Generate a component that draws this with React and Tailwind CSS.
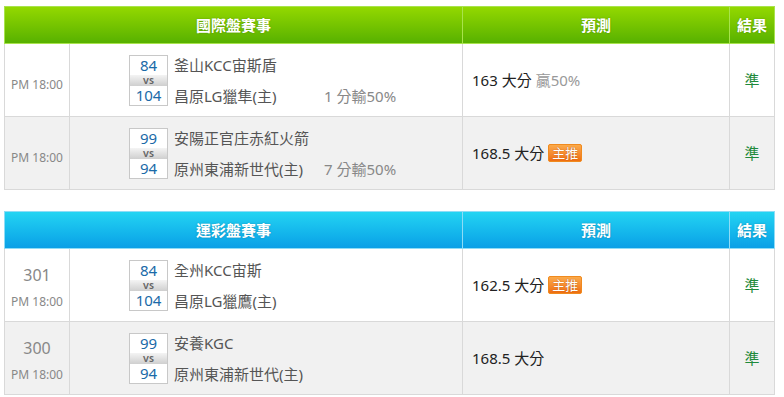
import React from 'react';

const font = { fontFamily: '"Noto Sans", "Noto Sans CJK TC", sans-serif' };

const tables = [
  {
    title: '國際盤賽事',
    theme: 'green',
    rows: [
      { time: 'PM 18:00', away: '釜山KCC宙斯盾', home: '昌原LG獵隼(主)', s1: '84', s2: '104', note: '1 分輸50%', pick: '163 大分', extra: '贏50%', result: '準' },
      { time: 'PM 18:00', away: '安陽正官庄赤紅火箭', home: '原州東浦新世代(主)', s1: '99', s2: '94', note: '7 分輸50%', pick: '168.5 大分', badge: true, result: '準' },
    ],
  },
  {
    title: '運彩盤賽事',
    theme: 'blue',
    rows: [
      { no: '301', time: 'PM 18:00', away: '全州KCC宙斯', home: '昌原LG獵鷹(主)', s1: '84', s2: '104', pick: '162.5 大分', badge: true, result: '準' },
      { no: '300', time: 'PM 18:00', away: '安養KGC', home: '原州東浦新世代(主)', s1: '99', s2: '94', pick: '168.5 大分', result: '準' },
    ],
  },
];

const Badge = () => (
  <span className="ml-[4px] inline-flex h-[18px] items-center rounded-[2px] border border-[#f08a1e] bg-gradient-to-b from-[#fbaa4a] to-[#ee6e10] px-[3px] text-[13px] leading-none text-white [text-shadow:0_0_1px_#a04000]">
    主推
  </span>
);

const ScoreBox = ({ s1, s2 }) => (
  <div className="flex w-[39px] flex-col border border-[#c8c8c8] bg-white">
    <div className="flex h-[19px] items-center justify-center text-[15px] leading-none text-[#1a6aa8]">{s1}</div>
    <div className="flex h-[11px] items-center justify-center bg-gradient-to-b from-[#f4f4f4] to-[#cfcfcf] text-[9px] font-bold leading-none text-[#666]">VS</div>
    <div className="flex h-[19px] items-center justify-center text-[15px] leading-none text-[#1a6aa8]">{s2}</div>
  </div>
);

const GameTable = ({ title, theme, rows }) => {
  const head =
    theme === 'green'
      ? 'bg-gradient-to-b from-[#93d800] to-[#55b000]'
      : 'bg-gradient-to-b from-[#24d4f2] to-[#0a9ee6]';
  const edge = theme === 'green' ? 'border-[#a8e34c]' : 'border-[#8edcf6]';
  const th = `border ${edge} text-[15px] font-bold text-white [text-shadow:0_0_2px_rgba(0,0,0,0.25)]`;
  return (
    <table className="w-[770px] table-fixed border-collapse" style={font}>
      <colgroup>
        <col className="w-[65px]" />
        <col className="w-[393px]" />
        <col className="w-[267px]" />
        <col className="w-[45px]" />
      </colgroup>
      <thead>
        <tr className={`h-[37px] ${head}`}>
          <th colSpan={2} className={th}>{title}</th>
          <th className={th}>預測</th>
          <th className={th}>結果</th>
        </tr>
      </thead>
      <tbody>
        {rows.map((r, i) => (
          <tr key={i} className={`h-[73px] ${i % 2 ? 'bg-[#f1f1f1]' : 'bg-white'}`}>
            <td className={`border border-[#d9d9d9] text-center text-[#888] ${r.no ? 'pt-[5px]' : 'pt-[10px]'}`}>
              {r.no && <div className="mb-[13px] text-[16px] leading-none">{r.no}</div>}
              <div className="text-[12px] leading-none">{r.time}</div>
            </td>
            <td className="border border-[#d9d9d9] pl-[59px]">
              <div className="flex items-center">
                <ScoreBox s1={r.s1} s2={r.s2} />
                <div className="ml-[6px] flex h-[51px] flex-col justify-between py-[1px] text-[15px] leading-[18px] text-[#555]">
                  <div>{r.away}</div>
                  <div className="flex">
                    <span className="w-[150px]">{r.home}</span>
                    {r.note && <span className="text-[#888]">{r.note}</span>}
                  </div>
                </div>
              </div>
            </td>
            <td className="border border-[#d9d9d9] pl-[9px] text-[15px] text-[#222]">
              <div className="flex items-center">
                <span>{r.pick}</span>
                {r.extra && <span className="ml-[4px] text-[#999]">{r.extra}</span>}
                {r.badge && <Badge />}
              </div>
            </td>
            <td className="border border-[#d9d9d9] text-center text-[15px] text-[#1f8a3c]">{r.result}</td>
          </tr>
        ))}
      </tbody>
    </table>
  );
};

export default function App() {
  return (
    <div className="flex min-h-[397px] w-[784px] flex-col gap-[21px] bg-white pl-[4px] pt-[6px]">
      {tables.map((t) => (
        <GameTable key={t.title} {...t} />
      ))}
    </div>
  );
}
